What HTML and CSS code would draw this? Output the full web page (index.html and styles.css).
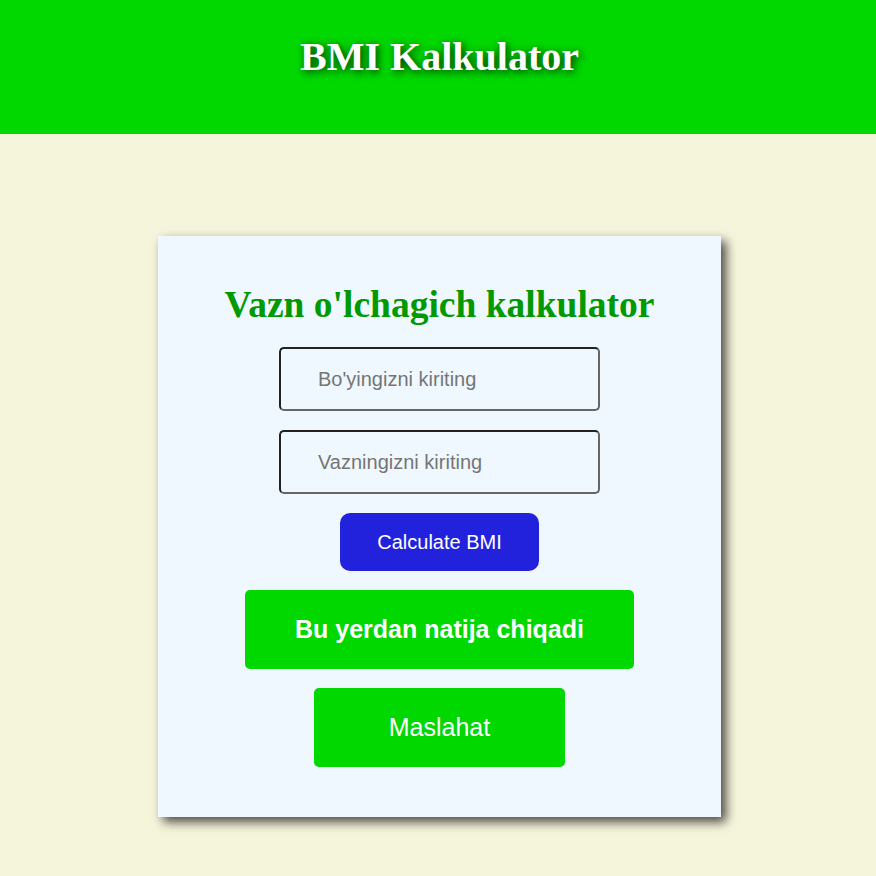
FILE: index.html
```html
<!DOCTYPE html>
<html lang="uz">
<head>
<meta charset="utf-8">
<title>BMI Kalkulator</title>
<link rel="stylesheet" href="styles.css">
</head>
<body>
<header class="top">
  <h1 class="top-title">BMI Kalkulator</h1>
</header>
<main class="page">
  <section class="card">
    <h2 class="card-title">Vazn o'lchagich kalkulator</h2>
    <input class="field" type="text" placeholder="Bo'yingizni kiriting">
    <input class="field" type="text" placeholder="Vazningizni kiriting">
    <button class="calc-btn" type="button">Calculate BMI</button>
    <div class="result">Bu yerdan natija chiqadi</div>
    <div class="advice">Maslahat</div>
  </section>
</main>
</body>
</html>
```
FILE: styles.css
```css
html, body {
  margin: 0;
  padding: 0;
}
body {
  background: #f5f5dc;
  font-family: "Liberation Sans", Arial, sans-serif;
}
.top {
  background: #00d800;
  height: 134px;
  display: flex;
  justify-content: center;
  padding-left: 3px;
}
.top-title {
  margin: 0;
  padding-top: 34px;
  font-family: "Liberation Serif", "Times New Roman", serif;
  font-size: 40px;
  font-weight: bold;
  line-height: 46px;
  color: #ffffff;
  text-shadow: 2px 2px 8px rgba(0, 0, 0, 0.8);
}
.page {
  display: flex;
  justify-content: center;
  padding-top: 102px;
  padding-bottom: 40px;
  padding-left: 3px;
}
.card {
  width: 563px;
  box-sizing: border-box;
  background: #f0f8ff;
  box-shadow: 5px 5px 10px rgba(0, 0, 0, 0.7);
  display: flex;
  flex-direction: column;
  align-items: center;
  padding: 47px 0 50px;
}
.card-title {
  margin: 0 0 20px;
  font-family: "Liberation Serif", "Times New Roman", serif;
  font-size: 37.5px;
  font-weight: bold;
  line-height: 44px;
  color: #009900;
}
.field {
  width: 321px;
  height: 64px;
  box-sizing: border-box;
  border: 2px solid;
  border-color: #222 #666 #666 #222;
  border-radius: 5px;
  background: #f0f8ff;
  padding: 0 0 0 37px;
  font-family: "Liberation Sans", Arial, sans-serif;
  font-size: 20px;
  color: #333;
  margin-bottom: 19px;
}
.field::placeholder {
  color: #757575;
}
.calc-btn {
  width: 199px;
  height: 58px;
  border: none;
  border-radius: 10px;
  background: #2222dd;
  color: #ffffff;
  font-family: "Liberation Sans", Arial, sans-serif;
  font-size: 20px;
  margin-bottom: 19px;
}
.result {
  width: 389px;
  height: 79px;
  border-radius: 5px;
  background: #00d800;
  color: #ffffff;
  font-size: 25px;
  font-weight: bold;
  display: flex;
  align-items: center;
  justify-content: center;
  margin-bottom: 19px;
}
.advice {
  width: 251px;
  height: 79px;
  border-radius: 5px;
  background: #00d800;
  color: #ffffff;
  font-size: 25px;
  display: flex;
  align-items: center;
  justify-content: center;
}
```
